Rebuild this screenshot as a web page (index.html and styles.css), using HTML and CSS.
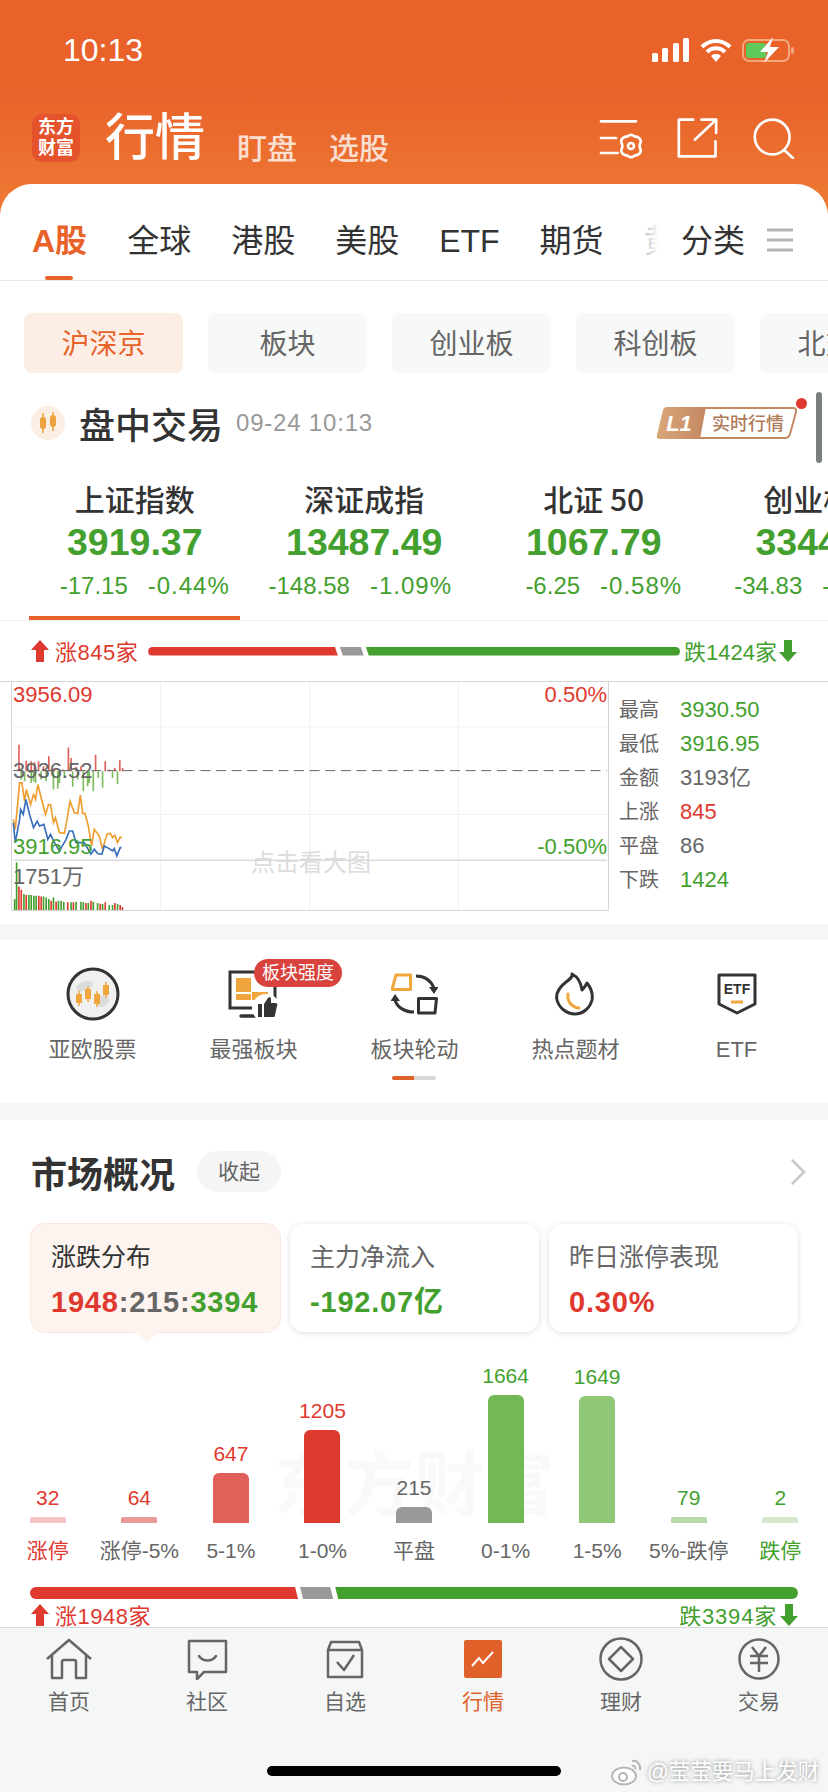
FILE: index.html
```html
<!DOCTYPE html>
<html lang="zh">
<head>
	<meta charset="UTF-8">
	<title>行情</title>
	<link rel="stylesheet" href="styles.css">
</head>
<body>
<div class="page">
	<div class="main">
		<div class="top">
			<div class="status">
				<span class="time">10:13</span>
				<div class="status-icons">
					<svg width="38" height="24" viewBox="0 0 38 24"><rect x="0" y="15" width="6" height="9" rx="1.5" fill="#fff"/><rect x="10" y="10" width="6" height="14" rx="1.5" fill="#fff"/><rect x="21" y="5" width="6" height="19" rx="1.5" fill="#fff"/><rect x="31" y="0" width="6" height="24" rx="1.5" fill="#fff"/></svg>
					<svg width="32" height="25" viewBox="0 0 32 25"><path d="M2 9c8-8 20-8 28 0M7 14c5-5 13-5 18 0" fill="none" stroke="#fff" stroke-width="4"/><path d="M11 18c3-3 7-3 10 0l-5 6z" fill="#fff"/></svg>
					<svg width="54" height="26" viewBox="0 0 54 26"><rect x="1" y="3" width="46" height="21" rx="6" fill="none" stroke="#f3a77c" stroke-width="2"/><rect x="4" y="6" width="20" height="15" rx="3" fill="#5fc95a"/><rect x="49" y="10" width="3" height="7" rx="1.5" fill="#f3a77c"/><path d="M31 0L18 15H26L22 26L37 10H28Z" fill="#fff"/></svg>
				</div>
			</div>
			<div class="head">
				<div class="logo">东方<br>财富</div>
				<div class="head-title">行情</div>
				<div class="head-sub">盯盘</div>
				<div class="head-sub">选股</div>
				<div class="head-icons">
					<svg width="44" height="41" viewBox="50 55 130 123" fill="none" stroke="#fff" stroke-width="8" stroke-linecap="round" stroke-linejoin="round"><path d="M55 65H160M55 115H100M55 160H105"/><path d="M136 109c5-4 13-4 18 0 3 3 7 1 12 4 5 3 9 9 8 14-1 4-3 7-3 12s2 8 3 12c1 5-3 11-8 14-5 3-9 1-12 4-5 4-13 4-18 0-3-3-7-1-12-4-5-3-9-9-8-14 1-4 3-7 3-12s-2-8-3-12c-1-5 3-11 8-14 5-3 9-1 12-4z"/><circle cx="145" cy="139" r="9"/></svg>
					<svg width="43" height="41" viewBox="284 55 128 123" fill="none" stroke="#fff" stroke-width="8" stroke-linecap="round" stroke-linejoin="round"><path d="M335 60H292V170H402V125"/><path d="M340 120L402 62M360 60H404V100"/></svg>
					<svg width="43" height="41" viewBox="512 50 130 125" fill="none" stroke="#fff" stroke-width="8" stroke-linecap="round"><circle cx="573" cy="108" r="53"/><path d="M612 150L636 172"/></svg>
				</div>
			</div>
		</div>

		<div class="content">
			<div class="tabs">
				<div class="tab-list">
					<span class="tab on">A股</span>
					<span class="tab">全球</span>
					<span class="tab">港股</span>
					<span class="tab">美股</span>
					<span class="tab">ETF</span>
					<span class="tab">期货</span>
					<span class="tab">黄</span>
				</div>
				<span class="tab">分类</span>
				<svg class="tab-menu" width="26" height="24" viewBox="0 0 26 24"><path d="M0 2H26M0 12H26M0 22H26" stroke="#b4b4b4" stroke-width="3"/></svg>
			</div>

			<div class="pills">
				<span class="pill on">沪深京</span>
				<span class="pill">板块</span>
				<span class="pill">创业板</span>
				<span class="pill">科创板</span>
				<span class="pill">北交所</span>
			</div>

			<div class="trade">
				<svg width="34" height="34" viewBox="0 0 34 34"><circle cx="17" cy="17" r="17" fill="#fbeee3"/><path d="M12 7V27M22 6V25" stroke="#eea13f" stroke-width="1.5"/><rect x="9" y="11" width="6" height="12" rx="3" fill="#eea13f"/><rect x="19" y="9" width="6" height="12" rx="3" fill="#eea13f"/></svg>
				<span class="trade-title">盘中交易</span>
				<span class="trade-date">09-24 10:13</span>
				<div class="l1">
					<svg width="141" height="32" viewBox="0 0 141 32">
						<defs><linearGradient id="l1g" x1="0" x2="1"><stop offset="0" stop-color="#d9a679"/><stop offset="1" stop-color="#c48863"/></linearGradient></defs>
						<path d="M11 0H50L44 32H4Q0 32 1 28L7 3Q8 0 11 0Z" fill="url(#l1g)"/>
						<path d="M49 1H137Q141 1 140 5L134 27Q133 31 129 31H44" fill="none" stroke="#c48863" stroke-width="2"/>
						<text x="23" y="24" class="l1-tag">L1</text>
						<text x="56" y="23" class="l1-text">实时行情</text>
					</svg>
					<span class="l1-dot"></span>
				</div>
			</div>
			<span class="scroll-mark"></span>

			<div class="indexes">
				<div class="index on">
					<div class="index-name">上证指数</div>
					<div class="index-val">3919.37</div>
					<div class="index-chg chg-right"><span>-17.15</span><span>-0.44%</span></div>
					<div class="index-line"></div>
				</div>
				<div class="index">
					<div class="index-name">深证成指</div>
					<div class="index-val">13487.49</div>
					<div class="index-chg chg-left"><span>-148.58</span><span>-1.09%</span></div>
					<div class="index-line"></div>
				</div>
				<div class="index">
					<div class="index-name">北证 50</div>
					<div class="index-val">1067.79</div>
					<div class="index-chg chg-right"><span>-6.25</span><span>-0.58%</span></div>
					<div class="index-line"></div>
				</div>
				<div class="index">
					<div class="index-name">创业板指</div>
					<div class="index-val">3344.15</div>
					<div class="index-chg chg-left"><span>-34.83</span><span>-1.03%</span></div>
					<div class="index-line"></div>
				</div>
			</div>

			<div class="breadth breadth-small">
				<svg width="18" height="22" viewBox="0 0 18 22"><path d="M9 0L18 10H13V22H5V10H0Z" fill="#e0392f"/></svg>
				<span class="breadth-up red">涨845家</span>
				<div class="track">
					<i class="seg seg-red" style="flex: 190"></i>
					<i class="seg seg-gray" style="flex: 24"></i>
					<i class="seg seg-green" style="flex: 315"></i>
				</div>
				<span class="breadth-down green">跌1424家</span>
				<svg width="18" height="22" viewBox="0 0 18 22"><path d="M5 0H13V12H18L9 22L0 12H5Z" fill="#43a02e"/></svg>
			</div>

			<div class="chart-row">
				<div class="plot">
					<svg class="plot-svg" viewBox="36 6 1788 687" fill="none">
						<path d="M480 6V693M930 6V693M1377 6V693M36 141H1824M36 405H1824" stroke="#eef0f2" stroke-width="3"/>
						<path d="M36 543H1824" stroke="#c9c9c9" stroke-width="3"/>
						<path d="M53 275V195M75 275V243M90 275V245M100 275V248M112 275V245M127 275V260M143 275V230M160 275V265M185 275V270M202 275V203M210 275V235M225 275V262M240 275V260M284 275V225M313 275V245M325 275V270M342 275V265M357 275V242M365 275V265" stroke="#e0605a" stroke-width="5"/>
						<path d="M60 275V300M70 275V305M90 275V310M97 275V305M103 275V310M120 275V300M135 275V305M157 275V330M170 275V328M175 275V310M190 275V295M215 275V322M230 275V300M247 275V335M260 275V320M265 275V310M277 275V335M292 275V295M305 275V325M335 275V295M350 275V313" stroke="#7fbc5f" stroke-width="5"/>
						<path d="M36 273H1824" stroke="#666" stroke-width="3" stroke-dasharray="30 17"/>
						<path d="M36 420L42 450L55 310L62 310L70 365L75 330L88 375L97 345L103 360L110 315L120 355L133 405L142 375L148 375L157 430L163 415L175 460L190 462L198 420L207 365L220 400L230 402L238 347L245 402L252 402L262 440L272 500L280 450L295 470L305 510L318 465L328 462L335 475L342 468L350 490L358 473L363 475" stroke="#ef9f32" stroke-width="5"/>
						<path d="M36 430L42 490L55 420L58 390L66 405L74 360L85 405L97 445L108 425L115 440L128 435L140 480L148 465L160 490L175 515L195 480L205 455L215 455L225 490L238 490L250 490L270 525L280 510L290 523L303 525L310 500L325 508L335 515L340 508L348 530L358 505L362 505" stroke="#3a6fbd" stroke-width="5"/>
						<path d="M40 693V660M46 693V550M68 693V645M83 693V647M90 693V648M98 693V650M105 693V650M127 693V652M135 693V655M143 693V660M157 693V655M172 693V665M180 693V665M188 693V668M210 693V670M225 693V668M240 693V668M247 693V670M262 693V672M277 693V668M290 693V672M305 693V675M325 693V678M335 693V678M350 693V675" stroke="#43a02e" stroke-width="5"/>
						<path d="M53 693V622M60 693V632M75 693V648M113 693V650M120 693V652M150 693V665M165 693V668M200 693V670M217 693V670M255 693V672M270 693V665M298 693V674M313 693V670M342 693V672M358 693V678M365 693V685" stroke="#e0392f" stroke-width="5"/>
					</svg>
					<span class="plot-label plot-high red">3956.09</span>
					<span class="plot-label plot-high plot-right red">0.50%</span>
					<span class="plot-label plot-mid">3936.52</span>
					<span class="plot-label plot-low green">3916.95</span>
					<span class="plot-label plot-low plot-right green">-0.50%</span>
					<span class="plot-label plot-vol">1751万</span>
					<span class="plot-tip">点击看大图</span>
				</div>
				<div class="side">
					<div class="side-row"><span>最高</span><b class="green">3930.50</b></div>
					<div class="side-row"><span>最低</span><b class="green">3916.95</b></div>
					<div class="side-row"><span>金额</span><b>3193亿</b></div>
					<div class="side-row"><span>上涨</span><b class="red">845</b></div>
					<div class="side-row"><span>平盘</span><b>86</b></div>
					<div class="side-row"><span>下跌</span><b class="green">1424</b></div>
				</div>
			</div>

			<div class="gap"></div>

			<div class="shortcuts">
				<div class="shortcut">
					<div class="shortcut-icon">
						<svg width="54" height="54" viewBox="0 0 54 54"><circle cx="27" cy="27" r="25" fill="#f0f0f0" stroke="#333" stroke-width="3"/><path d="M10 20c5-6 12-8 16-5s-3 8-8 9-6 2-8-4zM31 30c4-3 11-2 12 2s-5 9-8 8-7-7-4-10z" fill="#dcdcdc"/><path d="M13 24V39M22 19V35M31 24V40M40 15V31" stroke="#f0a63c" stroke-width="1.5"/><rect x="10" y="27" width="6" height="9" fill="#f0a63c"/><rect x="19" y="22" width="6" height="10" fill="#f0a63c"/><rect x="28" y="27" width="6" height="10" fill="#f0a63c"/><rect x="37" y="18" width="6" height="10" fill="#f0a63c"/></svg>
					</div>
					<div class="shortcut-name">亚欧股票</div>
				</div>
				<div class="shortcut">
					<div class="shortcut-icon">
						<svg width="52" height="48" viewBox="0 0 52 48"><path d="M47 14V38H2V2H30" fill="none" stroke="#333" stroke-width="3"/><path d="M13 46H29" stroke="#333" stroke-width="3.5" stroke-linecap="round"/><rect x="8" y="8" width="15" height="14" fill="#f0a63c"/><rect x="8" y="24" width="15" height="6" fill="#f0a63c"/><rect x="24" y="22" width="16" height="8" fill="#f0a63c"/><circle cx="38" cy="38" r="14" fill="#fff"/><path d="M30 34h4v13h-4zM36 34l4-6c2-2 3-1 3 2v3h4c2 0 3 1 2 3l-2 9c0 2-1 2-3 2H36z" fill="#333"/></svg>
						<span class="shortcut-badge">板块强度</span>
					</div>
					<div class="shortcut-name">最强板块</div>
				</div>
				<div class="shortcut">
					<div class="shortcut-icon">
						<svg width="47" height="42" viewBox="0 0 47 42" fill="none"><path d="M5 2H19.5V16.5H1Z" stroke="#f0a63c" stroke-width="3" stroke-linejoin="round"/><path d="M27.5 25.5H45.5L44 40H27.5Z" stroke="#333" stroke-width="3" stroke-linejoin="round"/><path d="M25 3c9 0 15 5 18 12M23 39C13 39 6 34 4 27" stroke="#333" stroke-width="3"/><path d="M38 14H47.5L43 21ZM-.5 28H9L4 21Z" fill="#333"/></svg>
					</div>
					<div class="shortcut-name">板块轮动</div>
				</div>
				<div class="shortcut">
					<div class="shortcut-icon">
						<svg width="41" height="44" viewBox="0 0 41 44" fill="none"><path d="M17 2c6 3 9 9 10 16 2-2 4-5 5-7 4 5 6 11 5 17-2 8-9 14-17 14S4 36 2 28C0 20 6 14 11 10c4-3 7-5 6-8z" stroke="#333" stroke-width="3" stroke-linejoin="round"/><path d="M13 22c-1 7 3 13 11 14" stroke="#f0a63c" stroke-width="3" stroke-linecap="round"/></svg>
					</div>
					<div class="shortcut-name">热点题材</div>
				</div>
				<div class="shortcut">
					<div class="shortcut-icon">
						<svg width="40" height="42" viewBox="0 0 40 42" fill="none"><path d="M2 2H38V31L20 40L2 31Z" stroke="#333" stroke-width="3" stroke-linejoin="round"/><text x="20" y="21" class="etf-mark">ETF</text><path d="M14 29H26" stroke="#f0a63c" stroke-width="3"/></svg>
					</div>
					<div class="shortcut-name">ETF</div>
				</div>
				<div class="slider"><i></i></div>
			</div>

			<div class="gap gap-b"></div>

			<div class="market">
				<div class="market-head">
					<span class="market-title">市场概况</span>
					<span class="market-fold">收起</span>
					<svg class="market-arrow" width="16" height="26" viewBox="0 0 16 26"><path d="M2 1L14 13L2 25" fill="none" stroke="#c8c8c8" stroke-width="2.5"/></svg>
				</div>
				<div class="cards">
					<div class="card on">
						<div class="card-label">涨跌分布</div>
						<div class="card-val"><span class="red">1948</span><span class="dim">:215:</span><span class="green">3394</span></div>
					</div>
					<div class="card">
						<div class="card-label">主力净流入</div>
						<div class="card-val green">-192.07亿</div>
					</div>
					<div class="card">
						<div class="card-label">昨日涨停表现</div>
						<div class="card-val red">0.30%</div>
					</div>
				</div>
				<div class="bars">
					<span class="bars-mark">东方财富</span>
					<div class="bar-col"><span class="bar-val red">32</span><i class="bar c1" style="height: 6px"></i><span class="bar-name red">涨停</span></div>
					<div class="bar-col"><span class="bar-val red">64</span><i class="bar c2" style="height: 6px"></i><span class="bar-name">涨停-5%</span></div>
					<div class="bar-col"><span class="bar-val red">647</span><i class="bar c3" style="height: 50px"></i><span class="bar-name">5-1%</span></div>
					<div class="bar-col"><span class="bar-val red">1205</span><i class="bar c4" style="height: 93px"></i><span class="bar-name">1-0%</span></div>
					<div class="bar-col"><span class="bar-val">215</span><i class="bar c5" style="height: 16px"></i><span class="bar-name">平盘</span></div>
					<div class="bar-col"><span class="bar-val green">1664</span><i class="bar c6" style="height: 128px"></i><span class="bar-name">0-1%</span></div>
					<div class="bar-col"><span class="bar-val green">1649</span><i class="bar c7" style="height: 127px"></i><span class="bar-name">1-5%</span></div>
					<div class="bar-col"><span class="bar-val green">79</span><i class="bar c8" style="height: 6px"></i><span class="bar-name">5%-跌停</span></div>
					<div class="bar-col"><span class="bar-val green">2</span><i class="bar c9" style="height: 6px"></i><span class="bar-name green">跌停</span></div>
				</div>
				<div class="track track-big">
					<i class="seg seg-red" style="flex: 267"></i>
					<i class="seg seg-gray" style="flex: 33"></i>
					<i class="seg seg-green" style="flex: 461"></i>
				</div>
				<div class="breadth breadth-foot">
					<svg width="18" height="22" viewBox="0 0 18 22"><path d="M9 0L18 10H13V22H5V10H0Z" fill="#e0392f"/></svg>
					<span class="breadth-up red">涨1948家</span>
					<span class="foot-right green">跌3394家</span>
					<svg width="18" height="22" viewBox="0 0 18 22"><path d="M5 0H13V12H18L9 22L0 12H5Z" fill="#43a02e"/></svg>
				</div>
			</div>
		</div>
	</div>

	<div class="nav">
		<div class="nav-items">
			<div class="nav-item">
				<svg width="46" height="42" viewBox="0 0 46 42" fill="none" stroke="#666" stroke-width="2.5" stroke-linejoin="round"><path d="M1 21L23 2L45 21M6 17V40H16V24a2 2 0 012-2h10a2 2 0 012 2V40H40V17"/></svg>
				<span>首页</span>
			</div>
			<div class="nav-item">
				<svg width="41" height="41" viewBox="0 0 41 41" fill="none" stroke="#666" stroke-width="2.5" stroke-linejoin="round"><path d="M2 2H39V33H17L10 40V33H2Z"/><path d="M12 17c4 6 13 6 17 0" stroke-linecap="round"/></svg>
				<span>社区</span>
			</div>
			<div class="nav-item">
				<svg width="38" height="39" viewBox="0 0 38 39" fill="none" stroke="#666" stroke-width="2.5" stroke-linejoin="round"><path d="M2 10H36V37H2ZM2 10L5 2H33L36 10"/><path d="M11 22l7 8L28 15"/></svg>
				<span>自选</span>
			</div>
			<div class="nav-item on">
				<svg width="38" height="38" viewBox="0 0 38 38"><rect width="38" height="38" rx="2" fill="#e0622a"/><path d="M8 26L15 18L19 23L29 12" fill="none" stroke="#fff" stroke-width="2"/></svg>
				<span>行情</span>
			</div>
			<div class="nav-item">
				<svg width="44" height="44" viewBox="0 0 44 44" fill="none" stroke="#666" stroke-width="2.5" stroke-linejoin="round"><circle cx="22" cy="22" r="20.5"/><path d="M22 10L34 22L22 34L10 22Z"/></svg>
				<span>理财</span>
			</div>
			<div class="nav-item">
				<svg width="42" height="42" viewBox="0 0 42 42" fill="none" stroke="#666" stroke-width="2.5"><circle cx="21" cy="21" r="19.5"/><path d="M14 9l7 9 7-9M12 18H30M12 25H30M21 18V34"/></svg>
				<span>交易</span>
			</div>
		</div>
		<div class="home-bar"></div>
	</div>

	<div class="mark">
		<svg width="32" height="28" viewBox="0 0 32 28" fill="none" stroke="#b5b5b5" stroke-width="2"><ellipse cx="13" cy="18" rx="12" ry="8.5" fill="#fff"/><circle cx="12" cy="19" r="4"/><path d="M21 3c5-1 9 3 8 9M21 8c2-1 4 1 3 3"/></svg>
		<span>@莹莹要马上发财</span>
	</div>
</div>
</body>
</html>
```

FILE: styles.css
```css
* { margin: 0; padding: 0; box-sizing: border-box; }
html, body { width: 828px; height: 1792px; overflow: hidden; }
body {
	background-color: #fff;
	color: #333;
	font-family: "Liberation Sans", "Noto Sans CJK SC", sans-serif;
}
i { display: block; }
svg { display: block; flex: none; }

.red { color: #e0392f; }
.green { color: #43a02e; }

.page {
	position: relative;
	width: 828px;
	height: 1792px;
	display: flex;
	flex-direction: column;
}
.main {
	flex: 1;
	min-height: 0;
	overflow: hidden;
}

/* orange header */
.top {
	height: 214px;
	background: linear-gradient(#e8622a, #e8622a 90px, #ee7a34);
	color: #fff;
}
.status {
	height: 100px;
	padding: 0 32px 0 63px;
	display: flex;
	align-items: center;
	justify-content: space-between;
}
.time { font-size: 32px; }
.status-icons {
	display: flex;
	align-items: center;
	gap: 10px;
}
.head {
	height: 48px;
	margin-top: 14px;
	padding: 0 33px 0 32px;
	display: flex;
	align-items: center;
}
.logo {
	width: 48px;
	height: 48px;
	border-radius: 10px;
	background-color: #e4532b;
	font-size: 18px;
	line-height: 21px;
	font-weight: 700;
	text-align: center;
	padding-top: 3px;
}
.head-title {
	margin-left: 25px;
	font-size: 50px;
	line-height: 48px;
	font-weight: 500;
}
.head-sub {
	margin-left: 32px;
	padding-top: 22px;
	font-size: 30px;
	line-height: 38px;
	font-weight: 500;
	color: rgba(255, 255, 255, .78);
}
.head-icons {
	margin-left: auto;
	display: flex;
	gap: 33px;
}

/* white sheet */
.content {
	position: relative;
	margin-top: -30px;
	background-color: #fff;
	border-radius: 32px 32px 0 0;
}
.tabs {
	height: 97px;
	padding-top: 37px;
	border-bottom: 1px solid #e6e9ec;
	display: flex;
	align-items: flex-start;
}
.tab-list {
	position: relative;
	flex: none;
	width: 681px;
	padding-left: 32px;
	display: flex;
	gap: 40px;
}
.tab-list:after {
	content: "";
	position: absolute;
	top: 0;
	right: 0;
	width: 44px;
	height: 40px;
	background: linear-gradient(to right, rgba(255, 255, 255, .55), #fff 50%);
}
.tab {
	position: relative;
	flex: none;
	font-size: 32px;
	line-height: 40px;
	color: #333;
}
.tab.on {
	color: #e8622a;
	font-weight: 700;
}
.tab.on:after {
	content: "";
	position: absolute;
	left: 13px;
	bottom: -19px;
	width: 28px;
	height: 4px;
	background-color: #e8622a;
	border-radius: 2px;
}
.tab-menu { margin: 7px 0 0 22px; }

.pills {
	margin-top: 32px;
	padding-left: 24px;
	display: flex;
	gap: 25px;
	overflow: hidden;
}
.pill {
	flex: none;
	width: 159px;
	height: 60px;
	line-height: 63px;
	text-align: center;
	font-size: 28px;
	color: #666;
	background-color: #f7f8f8;
	border-radius: 8px;
}
.pill.on {
	color: #e8622a;
	background-color: #fdeee5;
}

.trade {
	height: 34px;
	margin-top: 33px;
	padding: 0 31px;
	display: flex;
	align-items: center;
}
.trade-title {
	margin-left: 14px;
	font-size: 36px;
	font-weight: 500;
	color: #333;
}
.trade-date {
	margin-left: 13px;
	font-size: 24px;
	letter-spacing: .8px;
	color: #999;
}
.l1 {
	position: relative;
	margin-left: auto;
}
.l1-tag {
	font-size: 22px;
	font-weight: 700;
	font-style: italic;
	fill: #fff;
	text-anchor: middle;
}
.l1-text {
	font-size: 18px;
	font-weight: 500;
	fill: #b07a58;
}
.l1-dot {
	position: absolute;
	top: -9px;
	right: -10px;
	width: 11px;
	height: 11px;
	border-radius: 50%;
	background-color: #e0392f;
}
.scroll-mark {
	position: absolute;
	top: 208px;
	left: 816px;
	width: 6px;
	height: 71px;
	border-radius: 3px;
	background-color: #7b7f80;
}

.indexes {
	margin-top: 37px;
	padding-left: 20px;
	display: flex;
	border-bottom: 1px solid #eceeef;
	overflow: hidden;
}
.index {
	flex: none;
	width: 229.5px;
	text-align: center;
	white-space: nowrap;
}
.index-name {
	font-family: "Noto Sans CJK SC", sans-serif;
	font-size: 30px;
	line-height: 43px;
	font-weight: 500;
	color: #333;
}
.index-val {
	font-size: 37.5px;
	line-height: 44px;
	font-weight: 700;
	color: #43a02e;
}
.index-chg {
	font-size: 24px;
	line-height: 44px;
	color: #43a02e;
	display: flex;
	justify-content: center;
	gap: 20px;
}
.index-chg span + span { letter-spacing: 1px; }
.chg-right { padding-left: 20px; }
.chg-left { padding-right: 8px; }
.index-line {
	width: 211px;
	height: 4px;
	margin: 8px auto 0;
}
.index.on .index-line { background-color: #e8622a; }

.breadth {
	display: flex;
	align-items: center;
	font-size: 22px;
	white-space: nowrap;
}
.breadth span { margin-bottom: 3px; }
.breadth-small {
	height: 60px;
	padding: 0 31px;
}
.breadth-up {
	margin-left: 6px;
	letter-spacing: .5px;
}
.breadth-small .track { margin: 0 4px 0 10px; }
.breadth-down { margin-right: 2px; }
.track {
	display: flex;
	gap: 2px;
	height: 9px;
	flex: 1;
	border-radius: 5px;
	overflow: hidden;
}
.seg { min-width: 0; }
.seg-red {
	background-color: #e0392f;
	clip-path: polygon(0 0, calc(100% - 3px) 0, 100% 100%, 0 100%);
}
.seg-gray {
	background-color: #999;
	clip-path: polygon(0 0, calc(100% - 3px) 0, 100% 100%, 3px 100%);
}
.seg-green {
	background-color: #43a02e;
	clip-path: polygon(0 0, 100% 0, 100% 100%, 3px 100%);
}

.chart-row {
	height: 243px;
	padding: 0 0 13px 11px;
	display: flex;
	border-top: 1px solid #d6d6d6;
}
.plot {
	position: relative;
	width: 598px;
	height: 229px;
	border: 1px solid #d6d6d6;
	border-top: none;
	flex: none;
}
.plot-svg {
	position: absolute;
	top: 0;
	left: 0;
	width: 596px;
	height: 228px;
}
.plot-label {
	position: absolute;
	left: 1px;
	font-size: 22px;
	line-height: 26px;
	color: #666;
}
.plot-label.red { color: #e0392f; }
.plot-label.green { color: #43a02e; }
.plot-right { left: auto; right: 1px; }
.plot-high { top: 0; }
.plot-mid { top: 76px; }
.plot-low { top: 152px; }
.plot-vol { top: 182px; }
.plot-tip {
	position: absolute;
	top: 166px;
	left: 239px;
	font-size: 24px;
	line-height: 30px;
	color: #dcdcdc;
}
.side {
	padding: 11px 0 0 10px;
}
.side-row {
	height: 34px;
	display: flex;
	align-items: center;
	font-size: 20px;
	line-height: 34px;
	color: #666;
}
.side-row span { width: 61px; }
.side-row b {
	font-size: 22px;
	line-height: 34px;
	font-weight: 400;
}
.side-row b.green { color: #43a02e; }
.side-row b.red { color: #e0392f; }

.gap {
	height: 16px;
	background-color: #f5f6f7;
}
.gap-b { height: 17px; }

.shortcuts {
	position: relative;
	height: 163px;
	padding: 24px 0 0 12px;
	display: grid;
	grid-template-columns: repeat(5, 161px);
	align-content: start;
}
.shortcut {
	text-align: center;
}
.shortcut-icon {
	position: relative;
	height: 59px;
	display: flex;
	align-items: center;
	justify-content: center;
}
.shortcut-badge {
	position: absolute;
	top: -5px;
	left: 81px;
	width: 88px;
	height: 28px;
	border-radius: 14px;
	background-color: #d9433d;
	color: #fff;
	font-size: 18px;
	line-height: 28px;
}
.shortcut-name {
	margin-top: 10px;
	font-size: 22px;
	line-height: 34px;
	color: #666;
}
.etf-mark {
	font-size: 14px;
	font-weight: 700;
	fill: #333;
	text-anchor: middle;
}
.slider {
	grid-column: 1 / 6;
	width: 44px;
	height: 4px;
	margin: 9px 0 0 380px;
	background-color: #d8d8d8;
	border-radius: 2px;
	overflow: hidden;
}
.slider i {
	width: 22px;
	height: 4px;
	background-color: #e0602a;
}

.market { padding: 31px 30px 0 31px; }
.market-head {
	height: 41px;
	display: flex;
	align-items: center;
}
.market-title {
	font-size: 36px;
	font-weight: 700;
	color: #333;
}
.market-fold {
	width: 84px;
	height: 41px;
	margin-left: 22px;
	border-radius: 21px;
	background-color: #f5f5f5;
	text-align: center;
	font-size: 21px;
	line-height: 41px;
	color: #666;
}
.market-arrow { margin: 0 -8px 0 auto; }

.cards {
	margin-top: 32px;
	display: grid;
	grid-template-columns: repeat(3, 1fr);
	gap: 10px;
}
.card {
	position: relative;
	height: 108px;
	padding: 13px 0 0 20px;
	border-radius: 14px;
	background-color: #fff;
	box-shadow: 0 1px 6px rgba(0, 0, 0, .13);
}
.card.on {
	background-color: #fdf3ef;
	box-shadow: 0 0 0 1px #fbe8dc;
}
.card.on:after {
	content: "";
	position: absolute;
	left: 108px;
	bottom: -8px;
	width: 16px;
	height: 16px;
	background-color: #fdf3ef;
	transform: rotate(45deg);
}
.card-label {
	font-size: 25px;
	line-height: 40px;
	color: #666;
}
.card.on .card-label { color: #333; }
.card-val {
	margin-top: 5px;
	font-size: 29px;
	line-height: 40px;
	font-weight: 700;
	letter-spacing: .8px;
}
.dim { color: #666; }

.bars {
	position: relative;
	height: 239px;
	margin-left: -29px;
	margin-right: -28px;
	display: flex;
	align-items: flex-end;
}
.bars-mark {
	position: absolute;
	left: 272px;
	top: 112px;
	font-size: 70px;
	line-height: 84px;
	font-weight: 700;
	color: #f9f9f9;
}
.bar-col {
	position: relative;
	flex: 1;
	display: flex;
	flex-direction: column;
	align-items: center;
	white-space: nowrap;
}
.bar-val {
	font-size: 21px;
	line-height: 28px;
	margin-bottom: 5px;
	color: #666;
}
.bar {
	width: 36px;
	border-radius: 6px 6px 0 0;
}
.bar-name {
	margin-top: 8px;
	font-size: 21px;
	line-height: 40px;
	color: #666;
}
.bar-name.red { color: #e0392f; }
.bar-name.green { color: #43a02e; }
.bar-val.red { color: #e0392f; }
.bar-val.green { color: #43a02e; }
.c1 { background-color: #f3c6c4; border-radius: 2px 2px 0 0; }
.c2 { background-color: #e89a96; border-radius: 2px 2px 0 0; }
.c3 { background-color: #e2605a; }
.c4 { background-color: #dd3a2e; }
.c5 { background-color: #999; }
.c6 { background-color: #72b854; }
.c7 { background-color: #90c878; }
.c8 { background-color: #b7d9a5; border-radius: 2px 2px 0 0; }
.c9 { background-color: #d6e8cd; border-radius: 2px 2px 0 0; }

.track-big {
	height: 12px;
	margin: 16px 0 0 -1px;
	border-radius: 6px;
}
.breadth-foot {
	margin-top: 1px;
	height: 30px;
}
.foot-right {
	margin-left: auto;
	margin-right: 3px;
	letter-spacing: .8px;
}

/* bottom navigation */
.nav {
	flex: none;
	height: 165px;
	background-color: #f5f7f7;
	border-top: 1px solid #d5dce0;
}
.nav-items {
	padding-top: 9px;
	display: grid;
	grid-template-columns: repeat(6, 138px);
}
.nav-item {
	display: grid;
	grid-template-rows: 44px 37px;
	justify-items: center;
	align-items: center;
	font-size: 21px;
	color: #666;
}
.nav-item.on { color: #e0622a; }
.home-bar {
	width: 294px;
	height: 10px;
	margin: 48px auto 0;
	border-radius: 5px;
	background-color: #000;
}

.mark {
	position: absolute;
	left: 611px;
	top: 1756px;
	display: flex;
	align-items: center;
	gap: 4px;
	font-size: 21.5px;
	line-height: 32px;
	color: #fff;
	text-shadow: 0 0 4px #888;
	white-space: nowrap;
}
```
